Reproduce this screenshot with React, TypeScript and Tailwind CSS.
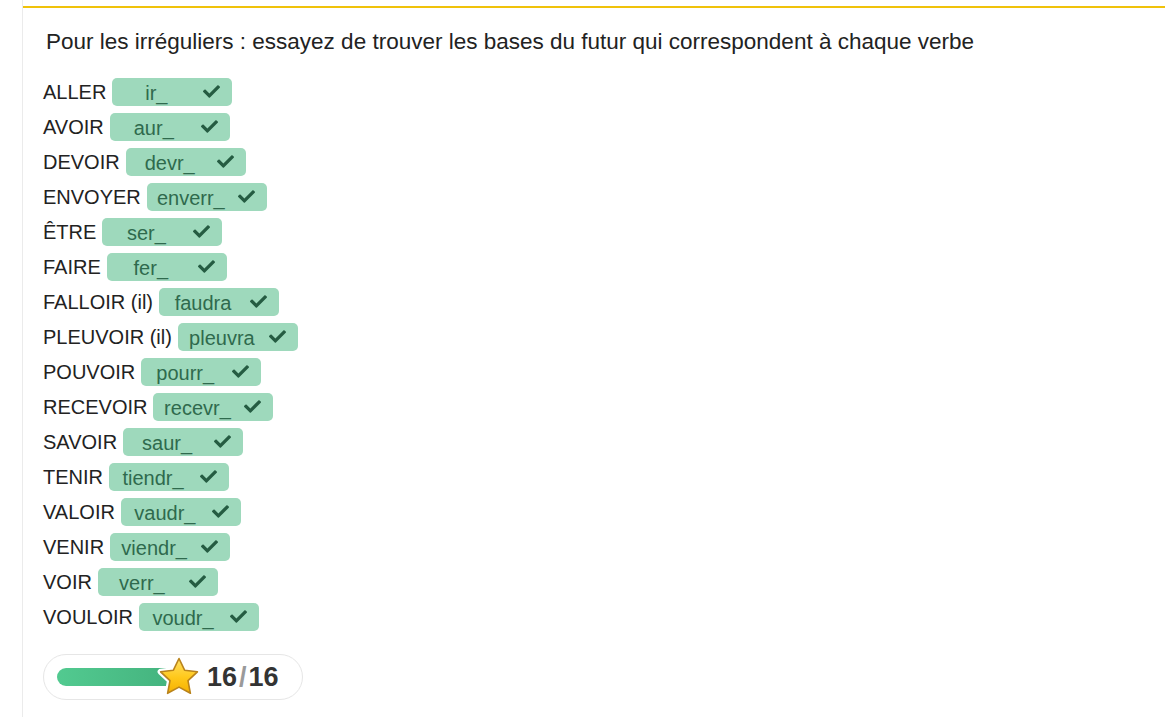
import { FaCheck } from "react-icons/fa";

const verbs: [string, string][] = [
  ["ALLER", "ir_"],
  ["AVOIR", "aur_"],
  ["DEVOIR", "devr_"],
  ["ENVOYER", "enverr_"],
  ["ÊTRE", "ser_"],
  ["FAIRE", "fer_"],
  ["FALLOIR (il)", "faudra"],
  ["PLEUVOIR (il)", "pleuvra"],
  ["POUVOIR", "pourr_"],
  ["RECEVOIR", "recevr_"],
  ["SAVOIR", "saur_"],
  ["TENIR", "tiendr_"],
  ["VALOIR", "vaudr_"],
  ["VENIR", "viendr_"],
  ["VOIR", "verr_"],
  ["VOULOIR", "voudr_"],
];

function Star() {
  return (
    <svg width="44" height="42" viewBox="0 0 44 42" className="-ml-[10px] relative">
      <defs>
        <linearGradient id="starFill" x1="0" y1="0" x2="0" y2="1">
          <stop offset="0" stopColor="#ffe066" />
          <stop offset="0.55" stopColor="#ffc81a" />
          <stop offset="1" stopColor="#f5b000" />
        </linearGradient>
      </defs>
      <path
        d="M22 2.5 L27.6 14.2 L40.4 15.8 L31 24.6 L33.4 37.3 L22 31.1 L10.6 37.3 L13 24.6 L3.6 15.8 L16.4 14.2 Z"
        fill="#ffffff"
        stroke="#ffffff"
        strokeWidth="6"
        strokeLinejoin="round"
      />
      <path
        d="M22 2.5 L27.6 14.2 L40.4 15.8 L31 24.6 L33.4 37.3 L22 31.1 L10.6 37.3 L13 24.6 L3.6 15.8 L16.4 14.2 Z"
        fill="url(#starFill)"
        stroke="#b9831c"
        strokeWidth="1.6"
        strokeLinejoin="round"
      />
    </svg>
  );
}

export default function App() {
  return (
    <div className="min-h-screen bg-white" style={{ fontFamily: '"Liberation Sans", Arial, sans-serif' }}>
      <div className="ml-[22px] min-h-screen border-l border-[#ebebeb] pt-[6px]">
        <div className="border-t-2 border-[#f0c20a] pl-[20px] pt-[19px] pb-4">
          <h1 className="text-[22.5px] leading-[30px] text-[#222] pl-[3px]">
            Pour les irréguliers : essayez de trouver les bases du futur qui correspondent à chaque verbe
          </h1>

          <div className="mt-[17px] flex flex-col">
            {verbs.map(([verb, base]) => (
              <div key={verb} className="h-[35px] flex items-center text-[20px] text-[#222]">
                <span>{verb}</span>
                <span className="ml-[6px] h-[28px] w-[120px] rounded-[5px] bg-[#9ed9bc] flex items-center">
                  <span className="w-[88px] text-center text-[#2f6a4d] leading-[28px] pt-[2px]">{base}</span>
                  <FaCheck className="ml-[3px] text-[#255c42]" size={17} />
                </span>
              </div>
            ))}
          </div>

          <div className="mt-[20px] w-[260px] h-[46px] rounded-full border border-[#e6e6e6] flex items-center pl-[13px]">
            <div className="w-[110px] h-[18px] rounded-l-full bg-gradient-to-r from-[#52ca90] to-[#45b47f]" />
            <Star />
            <span className="ml-[6px] text-[27px] font-bold text-[#333] leading-none">
              16<span className="text-[#9a9a9a] mx-[2px]">/</span>16
            </span>
          </div>
        </div>
      </div>
    </div>
  );
}
